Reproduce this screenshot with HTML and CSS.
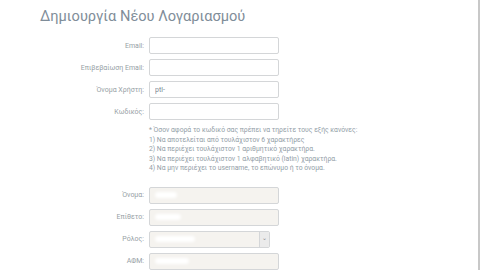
FILE: index.html
```html
<!DOCTYPE html>
<html lang="el">
<head>
    <meta charset="UTF-8">
    <title>Δημιουργία Νέου Λογαριασμού</title>
    <link rel="stylesheet" href="styles.css">
</head>
<body>
    <div class="page">
        <h1>Δημιουργία Νέου Λογαριασμού</h1>

        <div class="form-grid">
            <label>Email:</label>
            <input type="text" class="field">

            <label>Επιβεβαίωση Email:</label>
            <input type="text" class="field">

            <label>Όνομα Χρήστη:</label>
            <input type="text" class="field" value="ptl-">

            <label>Κωδικός:</label>
            <input type="password" class="field">

            <span></span>
            <div class="rules">
                <p>* Όσον αφορά το κωδικό σας πρέπει να τηρείτε τους εξής κανόνες:</p>
                <p>1) Να αποτελείται από τουλάχιστον 6 χαρακτήρες</p>
                <p>2) Να περιέχει τουλάχιστον 1 αριθμητικό χαρακτήρα.</p>
                <p>3) Να περιέχει τουλάχιστον 1 αλφαβητικό (latin) χαρακτήρα.</p>
                <p>4) Να μην περιέχει το username, το επώνυμο ή το όνομα.</p>
            </div>
        </div>

        <div class="form-grid second">
            <label>Όνομα:</label>
            <div class="field disabled"><span class="hidden-value" style="width:22px"></span></div>

            <label>Επίθετο:</label>
            <div class="field disabled"><span class="hidden-value" style="width:26px"></span></div>

            <label>Ρόλος:</label>
            <div class="field disabled select">
                <span class="hidden-value" style="width:40px"></span>
                <span class="arrow">&#8964;</span>
            </div>

            <label>ΑΦΜ:</label>
            <div class="field disabled"><span class="hidden-value" style="width:34px"></span></div>
        </div>
    </div>
</body>
</html>
```

FILE: styles.css
```css
body {
    margin: 0;
    font-family: Roboto, "Noto Sans", sans-serif;
    background-color: white;
    height: 270px;
    overflow: hidden;
}

.page {
    border-right: 2px solid #c8c8c8;
    width: 480px;
    height: 270px;
    padding-left: 40px;
    box-sizing: border-box;
}

h1 {
    margin: 0;
    padding-top: 7px;
    font-size: 14.6px;
    font-weight: 400;
    color: #7f8d99;
    height: 30px;
}

.form-grid {
    display: grid;
    grid-template-columns: 104px 130px;
    column-gap: 5px;
    row-gap: 5px;
    align-items: center;
}

.form-grid label {
    text-align: right;
    font-size: 7px;
    color: #979fa6;
}

.field {
    height: 17px;
    box-sizing: border-box;
    border: 1px solid #d4d6d8;
    border-radius: 2px;
    font-family: Roboto, sans-serif;
    font-size: 7px;
    color: #7d8790;
    padding: 0 5px;
    margin: 0;
    background-color: white;
}

.rules {
    padding-top: 1px;
    font-size: 6.8px;
    color: #939ea7;
}

.rules p {
    margin: 0;
    line-height: 9.6px;
    white-space: nowrap;
}

.second {
    margin-top: 13px;
}

.disabled {
    background-color: #f5f3ef;
    display: flex;
    align-items: center;
}

.select {
    width: 121px;
    padding-right: 0;
}

.hidden-value {
    display: inline-block;
    height: 6px;
    background-color: white;
    border-radius: 3px;
    filter: blur(1.5px);
}

.arrow {
    margin-left: auto;
    width: 9px;
    height: 15px;
    border-left: 1px solid #d4d6d8;
    background-color: #ebebeb;
    color: #8a8a8a;
    font-size: 6px;
    text-align: center;
    line-height: 12px;
}
```
